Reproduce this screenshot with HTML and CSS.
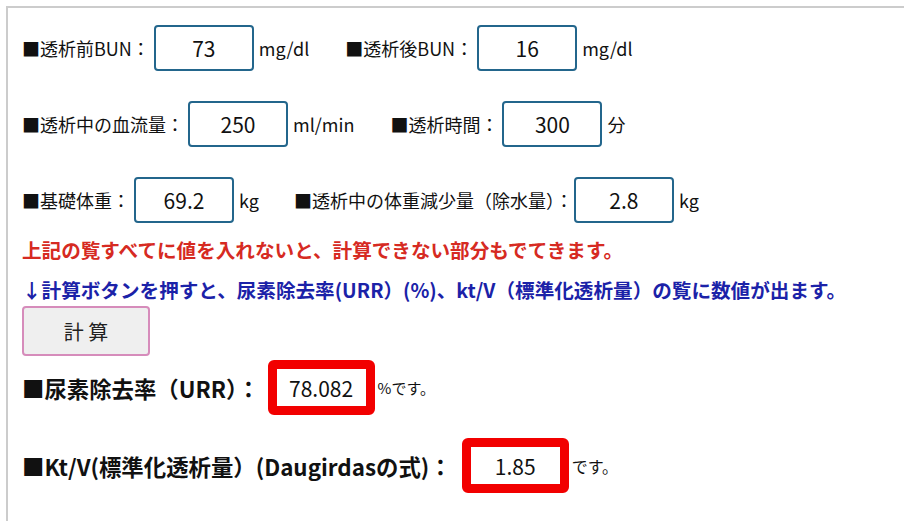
FILE: index.html
```
<!DOCTYPE html>
<html lang="ja">
<head>
<meta charset="utf-8">
<title>透析計算</title>
<link rel="stylesheet" href="styles.css">
</head>
<body>
<div class="frame">
  <div class="row">
    <span class="label">■透析前BUN：</span>
    <input class="num" type="text" value="73">
    <span class="unit">mg/dl</span>
    <span class="label next">■透析後BUN：</span>
    <input class="num" type="text" value="16">
    <span class="unit">mg/dl</span>
  </div>
  <div class="row">
    <span class="label">■透析中の血流量：</span>
    <input class="num" type="text" value="250">
    <span class="unit">ml/min</span>
    <span class="label next">■透析時間：</span>
    <input class="num" type="text" value="300">
    <span class="unit">分</span>
  </div>
  <div class="row">
    <span class="label">■基礎体重：</span>
    <input class="num" type="text" value="69.2">
    <span class="unit">kg</span>
    <span class="label next tight">■透析中の体重減少量（除水量）：</span>
    <input class="num" type="text" value="2.8">
    <span class="unit">kg</span>
  </div>
  <p class="note warn">上記の覧すべてに値を入れないと、計算できない部分もでてきます。</p>
  <p class="note info">↓計算ボタンを押すと、尿素除去率(URR）(%)、kt/V（標準化透析量）の覧に数値が出ます。</p>
  <button class="calc" type="button">計 算</button>
  <div class="result urr">
    <span class="rlabel">■尿素除去率（URR）：</span>
    <input class="out" type="text" value="78.082" readonly>
    <span class="suffix small">%です。</span>
  </div>
  <div class="result ktv">
    <span class="rlabel">■Kt/V(標準化透析量）(Daugirdasの式)：</span>
    <input class="out" type="text" value="1.85" readonly>
    <span class="suffix">です。</span>
  </div>
</div>
</body>
</html>
```
FILE: styles.css
```
html, body {
  margin: 0;
  padding: 0;
  background: #ffffff;
}
body {
  font-family: "Noto Sans CJK JP", "Noto Sans", sans-serif;
  color: #111;
  overflow: hidden;
  height: 521px;
}
.frame {
  box-sizing: border-box;
  height: 515px;
  margin: 6px 0 0 6px;
  border-top: 2px solid #cccccc;
  border-left: 2px solid #cccccc;
  padding: 17px 0 0 14px;
  overflow: hidden;
}
.row {
  display: flex;
  align-items: center;
  height: 46px;
  margin-bottom: 30px;
  font-size: 18px;
  white-space: nowrap;
}
.row + .row + .row {
  margin-bottom: 0;
}
.label {
  margin-right: 4px;
}
.label.next {
  margin-left: 36px;
}
.label.next.tight {
  margin-left: 35px;
  margin-right: 1px;
}
.num {
  box-sizing: border-box;
  width: 100px;
  height: 46px;
  border: 2.5px solid #23668c;
  border-radius: 4px;
  background: #fff;
  text-align: center;
  font-family: "Noto Sans CJK JP", "Noto Sans", sans-serif;
  font-size: 21px;
  color: #111;
  padding: 0;
  outline: none;
}
.unit {
  margin-left: 5px;
}
.note {
  margin: 0;
  font-size: 19.6px;
  line-height: 30px;
  font-weight: 700;
  white-space: nowrap;
}
.warn {
  color: #d62a22;
  margin-top: 12px;
}
.info {
  color: #1b22a8;
  margin-top: 10px;
}
.calc {
  display: block;
  box-sizing: border-box;
  width: 128px;
  height: 50px;
  margin-top: 1px;
  background: #efefef;
  border: 2px solid #d68cbb;
  border-radius: 4px;
  font-family: "Noto Sans CJK JP", "Noto Sans", sans-serif;
  font-size: 20px;
  color: #222;
  padding: 0;
}
.result {
  display: flex;
  align-items: center;
  height: 55px;
  white-space: nowrap;
}
.urr {
  margin-top: 4px;
}
.ktv {
  margin-top: 23px;
}
.rlabel {
  font-size: 22.4px;
  font-weight: 700;
  margin-right: 8px;
}
.ktv .rlabel {
  margin-right: 10px;
}
.out {
  box-sizing: border-box;
  width: 107px;
  height: 55px;
  border: 9px solid #f20000;
  border-radius: 6px;
  background: #fff;
  text-align: center;
  font-family: "Noto Sans CJK JP", "Noto Sans", sans-serif;
  font-size: 21px;
  color: #111;
  padding: 0;
  outline: none;
}
.suffix {
  font-size: 16px;
  margin-left: 3px;
}
.suffix.small {
  font-size: 15px;
}
```
